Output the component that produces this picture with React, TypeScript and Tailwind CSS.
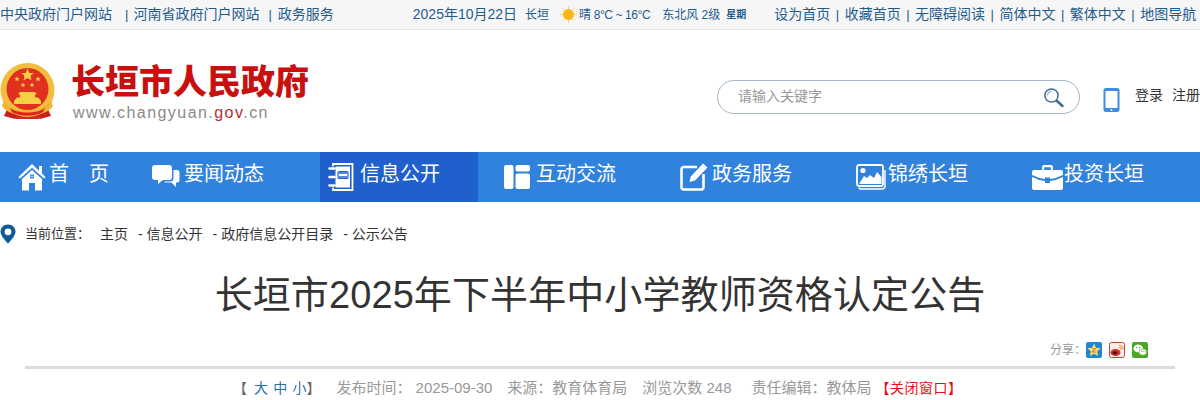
import React from 'react';

const STAR = 'M0 -1 L.29 -.31 L.95 -.31 L.47 .12 L.59 .81 L0 .45 L-.59 .81 L-.47 .12 L-.95 -.31 L-.29 -.31Z';

const Emblem = () => (
  <svg width="56" height="60" viewBox="0 0 56 60">
    <path d="M9 44 L4 55 L15 58 L22 52 Z M46 44 L51 55 L40 58 L33 52 Z" fill="#c9201c" />
    <rect x="16" y="53" width="23" height="5" fill="#d8261f" />
    <circle cx="27.5" cy="29" r="27" fill="#f3bd3d" />
    <circle cx="27.5" cy="28" r="21" fill="#e0301f" />
    <path d={STAR} transform="translate(27.5 14) scale(6.5)" fill="#f6cf45" />
    <path d={STAR} transform="translate(17 18) scale(2.8)" fill="#f6cf45" />
    <path d={STAR} transform="translate(38 18) scale(2.8)" fill="#f6cf45" />
    <path d={STAR} transform="translate(23 24) scale(2.6)" fill="#f6cf45" />
    <path d={STAR} transform="translate(32 24) scale(2.6)" fill="#f6cf45" />
    <path d="M20 31 h15 l2 2.5 h-2 v3 h3 l3 3.5 v3 H14 v-3 l3-3.5 h3 v-3 h-2z" fill="#f6cf45" />
    <path d="M4 40 C12 53 43 53 51 40 L53 45 C45 58 10 58 2 45Z" fill="#efb533" />
    <path d="M10 47 C18 53 37 53 45 47 L43 51 C35 56 20 56 12 51Z" fill="#d8261f" />
  </svg>
);

const HomeIcon = () => (
  <svg width="28" height="28" viewBox="0 0 28 28" fill="#fff">
    <path d="M14 1 L0.5 14 L2 15.5 L14 4.8 L26 15.5 L27.5 14 L24 10.6 V3 H21 V7.8Z" />
    <path d="M14 7 L4 16 V27.5 H11 V20 H17 V27.5 H24 V16Z" />
    <rect x="12" y="11.5" width="4" height="4" fill="#3182dc" />
    <path d="M13.8 11.5 h.4 v4 h-.4z M12 13.3 h4 v.4 h-4z" />
  </svg>
);

const ChatIcon = () => (
  <svg width="28" height="26" viewBox="0 0 28 26" fill="#fff">
    <path d="M3 1 H17 Q20 1 20 4 V13 Q20 16 17 16 H11 L6 20 V16 H3 Q0 16 0 13 V4 Q0 1 3 1Z" />
    <path d="M21.5 6 H25 Q27.5 6 27.5 8.5 V16 Q27.5 18.5 25 18.5 H24 V23 L19.5 18.5 H12.5 L12.5 17.5 H18 Q21.5 17.5 21.5 14Z" />
  </svg>
);

const BookIcon = () => (
  <svg width="26" height="28" viewBox="0 0 26 28" fill="none" stroke="#fff">
    <path d="M5 3.5 V1 H24.5 V27 H5 V24.5" strokeWidth="1.8" />
    <rect x="7.5" y="3.5" width="14.5" height="21" fill="#fff" stroke="none" />
    <path d="M11 10 h8 M11 14 h8" stroke="#2060cc" strokeWidth="1.5" />
    <rect x="10" y="8.5" width="10" height="7" rx="1" stroke="#2060cc" strokeWidth="1.2" />
    <path d="M1.5 5.5 h5 M1.5 14 h5 M1.5 22.5 h5" strokeWidth="2.6" strokeLinecap="round" />
  </svg>
);

const PanelIcon = () => (
  <svg width="26" height="24" viewBox="0 0 26 24" fill="#fff">
    <rect x="0" y="0" width="9.5" height="24" rx="2" />
    <rect x="11.5" y="0" width="14.5" height="6.5" rx="2" />
    <rect x="11.5" y="8.5" width="14.5" height="15.5" rx="2" />
  </svg>
);

const EditIcon = () => (
  <svg width="28" height="28" viewBox="0 0 28 28" fill="none">
    <path d="M17 4 H4 Q1.5 4 1.5 6.5 V24 Q1.5 26.5 4 26.5 H21 Q23.5 26.5 23.5 24 V11" stroke="#fff" strokeWidth="2.6" />
    <path d="M23 0.5 L27.5 4.5 L15 17.5 L9.5 19 L10.8 13.5Z" fill="#fff" />
  </svg>
);

const PictureIcon = () => (
  <svg width="30" height="26" viewBox="0 0 30 26" fill="none">
    <path d="M3 23.5 Q3 25 5 25 H26 Q29 25 29 22 V6" stroke="#fff" strokeWidth="1.4" />
    <rect x="1" y="1" width="26" height="21" rx="2" stroke="#fff" strokeWidth="1.8" />
    <circle cx="7" cy="6.5" r="2.6" fill="#fff" />
    <path d="M3 20 L8 12 L11 14 L14 11 L18 14 L21 8 L25.5 13 V20Z" fill="#fff" />
  </svg>
);

const CaseIcon = () => (
  <svg width="31" height="26" viewBox="0 0 31 26" fill="#fff">
    <path d="M10 6 V3 Q10 1 12 1 H19 Q21 1 21 3 V6 H18.8 V3.2 H12.2 V6Z" />
    <path d="M2 6 H29 Q31 6 31 8 V11 Q24 14.5 18 15 V13.5 H13 V15 Q7 14.5 0 11 V8 Q0 6 2 6Z" />
    <path d="M0 13 Q7 16.5 13 17 V19 H18 V17 Q24 16.5 31 13 V24 Q31 26 29 26 H2 Q0 26 0 24Z" />
  </svg>
);

const NAV = [
  { label: '首　页', Icon: HomeIcon, w: 'w-[132px] pl-[18px] gap-[3px]' },
  { label: '要闻动态', Icon: ChatIcon, w: 'w-[188px] pl-[20px] gap-[4px]' },
  { label: '信息公开', Icon: BookIcon, w: 'w-[158px] pl-[8px] gap-[6px] bg-[#2060cc]' },
  { label: '互动交流', Icon: PanelIcon, w: 'w-[176px] pl-[26px] gap-[6px]' },
  { label: '政务服务', Icon: EditIcon, w: 'w-[176px] pl-[26px] gap-[4px]' },
  { label: '锦绣长垣', Icon: PictureIcon, w: 'w-[176px] pl-[26px] gap-[2px]' },
  { label: '投资长垣', Icon: CaseIcon, w: 'w-[194px] pl-[26px] gap-[1px]' },
];

const RIGHT_LINKS = ['收藏首页', '无障碍阅读', '简体中文', '繁体中文', '地图导航'];

export default function App() {
  return (
    <div className="h-[400px] w-[1200px] overflow-hidden bg-white font-['Liberation_Sans','Noto_Sans_CJK_SC',sans-serif]">
      {/* top bar */}
      <div className="flex h-[30px] items-center whitespace-nowrap border-b border-[#e5e5e5] bg-[#f6f6f6] text-[14px] text-[#1f5c8e]">
        <span>中央政府门户网站</span>
        <span className="ml-[13px] mr-[5px] text-[13px]">|</span>
        <span>河南省政府门户网站</span>
        <span className="ml-[9px] mr-[5px] text-[13px]">|</span>
        <span className="ml-[1px]">政务服务</span>
        <span className="ml-[79px]">2025年10月22日</span>
        <span className="ml-[8px] text-[12px]">长垣</span>
        <svg className="ml-[11px] shrink-0" width="17" height="17" viewBox="0 0 17 17">
          <g stroke="#f8cf74" strokeWidth="1">
            <path d="M8.5 0 V3 M8.5 14 V17 M0 8.5 H3 M14 8.5 H17 M2.5 2.5 L4.5 4.5 M12.5 12.5 L14.5 14.5 M2.5 14.5 L4.5 12.5 M12.5 4.5 L14.5 2.5" />
          </g>
          <circle cx="8.5" cy="8.5" r="5.5" fill="#fdb813" />
        </svg>
        <span className="ml-[2px] text-[12px] tracking-[-0.4px]">晴 8°C ~ 16°C</span>
        <span className="ml-[12px] text-[12px]">东北风 2级</span>
        <span className="ml-[6px] text-[10px] font-bold">星期</span>
        <span className="ml-[28px]">设为首页</span>
        {RIGHT_LINKS.map((t) => (
          <React.Fragment key={t}>
            <span className="mx-[5.5px] text-[13px]">|</span>
            <span>{t}</span>
          </React.Fragment>
        ))}
      </div>

      {/* header */}
      <div className="flex h-[122px] items-start">
        <div className="mt-[31px] w-[56px] shrink-0">
          <Emblem />
        </div>
        <div className="ml-[17px] mt-[32px] w-[300px] shrink-0">
          <div className="ml-[-2px] whitespace-nowrap text-[34px] font-black leading-[40px] text-[#c8100f]">长垣市人民政府</div>
          <div className="mt-[2px] text-[16px] leading-[18px] tracking-[1.45px] text-[#8a8a8a]">
            www.changyuan.<span className="text-[#b03030]">gov</span>.cn
          </div>
        </div>
        <div className="ml-[344px] mt-[50px] flex h-[34px] w-[363px] shrink-0 items-center rounded-full border border-[#a5b5c5] pl-[20px] pr-[15px]">
          <span className="mb-[2px] flex-1 text-[14px] text-[#999]">请输入关键字</span>
          <svg className="mt-[2px]" width="20" height="20" viewBox="0 0 20 20" fill="none">
            <circle cx="7.5" cy="7.5" r="6.6" stroke="#3f6b94" strokeWidth="1.5" />
            <path d="M3.5 7.5 A4 4 0 0 1 7.5 3.5" stroke="#8aa6c0" strokeWidth="1.2" />
            <path d="M13 13 L18.5 18" stroke="#3f6b94" strokeWidth="2.4" strokeLinecap="round" />
          </svg>
        </div>
        <svg className="ml-[23px] mt-[58px] shrink-0" width="17" height="24" viewBox="0 0 17 24">
          <rect x="0.5" y="0" width="16" height="24" rx="2.5" fill="#3d8ee0" />
          <rect x="2.5" y="3" width="12" height="17" fill="#fff" />
          <circle cx="8.5" cy="22" r="1" fill="#fff" />
        </svg>
        <div className="ml-[15px] mt-[55px] flex shrink-0 gap-[9px] whitespace-nowrap text-[14px] leading-[20px] text-[#333]">
          <span>登录</span>
          <span>注册</span>
        </div>
      </div>

      {/* nav */}
      <div className="flex h-[50px] bg-[#3182dc] text-[20px] text-white">
        {NAV.map(({ label, Icon, w }) => (
          <div key={label} className={`flex h-full shrink-0 items-center ${w}`}>
            <Icon />
            <span className="mb-[6px] whitespace-nowrap">{label}</span>
          </div>
        ))}
      </div>

      {/* breadcrumb */}
      <div className="flex h-[64px] items-center whitespace-nowrap text-[14px] text-[#333]">
        <svg width="16" height="20" viewBox="0 0 16 20" className="shrink-0">
          <path d="M8 0.5 C3.5 0.5 0.5 3.8 0.5 7.8 C0.5 12.5 8 19.5 8 19.5 C8 19.5 15.5 12.5 15.5 7.8 C15.5 3.8 12.5 0.5 8 0.5Z" fill="#0f5a96" />
          <circle cx="8" cy="7.8" r="3.4" fill="#fff" />
        </svg>
        <span className="ml-[9px] text-[13px]">当前位置：</span>
        <span className="ml-[10px]">主页</span>
        <span className="ml-[10px]">- 信息公开</span>
        <span className="ml-[10px]">- 政府信息公开目录</span>
        <span className="ml-[10px]">- 公示公告</span>
      </div>

      {/* article head */}
      <h1 className="mt-[1px] text-center text-[38px] font-normal leading-[56px] tracking-[0.1px] text-[#333]">
        长垣市2025年下半年中小学教师资格认定公告
      </h1>
      <div className="mx-[25px] mt-[14px] flex h-[26px] items-center justify-end gap-[7px] pr-[27px]">
        <span className="mr-[-7px] text-[12px] text-[#999]">分享：</span>
        <svg width="16" height="16" viewBox="0 0 16 16">
          <rect width="16" height="16" rx="2" fill="#1c86d8" />
          <path d="M8 1.5 l2 4.2 4.6.6-3.4 3.1.9 4.6-4.1-2.3-4.1 2.3.9-4.6-3.4-3.1 4.6-.6z" fill="#f8dc6a" />
          <path d="M6 6.2 h4 v.9 L7.4 9.5 h2.8 v.9 H5.8 v-.9 L8.4 7.1 H6z" fill="#d98a12" />
        </svg>
        <svg width="16" height="16" viewBox="0 0 16 16">
          <rect x="0.5" y="0.5" width="15" height="15" rx="2" fill="#faeee6" stroke="#c2452c" />
          <ellipse cx="6.5" cy="10.5" rx="5" ry="3.6" fill="#d52c2b" />
          <ellipse cx="6" cy="10.8" rx="2.2" ry="1.6" fill="#222" />
          <path d="M10 3.5 A4 4 0 0 1 14 7.5 M10 5.5 A2 2 0 0 1 12 7.5" stroke="#f08a24" strokeWidth="1.2" fill="none" />
        </svg>
        <svg width="16" height="16" viewBox="0 0 16 16">
          <rect width="16" height="16" rx="2" fill="#45a81e" />
          <ellipse cx="6.2" cy="6.5" rx="4.8" ry="3.9" fill="#fff" />
          <ellipse cx="10.8" cy="10" rx="3.9" ry="3.2" fill="#fff" stroke="#45a81e" strokeWidth="0.6" />
          <circle cx="4.6" cy="5.6" r="0.7" fill="#45a81e" />
          <circle cx="7.6" cy="5.6" r="0.7" fill="#45a81e" />
          <circle cx="9.6" cy="9.5" r="0.6" fill="#45a81e" />
          <circle cx="12" cy="9.5" r="0.6" fill="#45a81e" />
        </svg>
      </div>
      <div className="mx-[25px] mt-[3px] h-[3px] bg-[#dcdcdc]" />
      <div className="mt-[9px] flex whitespace-nowrap pl-[233px] text-[15px] leading-[20px] text-[#999]">
        <span className="text-[14px] text-[#666]">【</span>
        <span className="ml-[7px] flex gap-[5.3px] text-[14px] text-[#2a6ea8]">
          <span>大</span>
          <span>中</span>
          <span>小</span>
        </span>
        <span className="text-[14px] text-[#666]">】</span>
        <span className="ml-[16px]">发布时间：</span>
        <span className="ml-[4px]">2025-09-30</span>
        <span className="ml-[15px]">来源：教育体育局</span>
        <span className="ml-[15px]">浏览次数 248</span>
        <span className="ml-[20px]">责任编辑：教体局</span>
        <span className="ml-[4px] text-[14px] tracking-[0.5px] text-[#e01010]">【关闭窗口】</span>
      </div>
    </div>
  );
}
